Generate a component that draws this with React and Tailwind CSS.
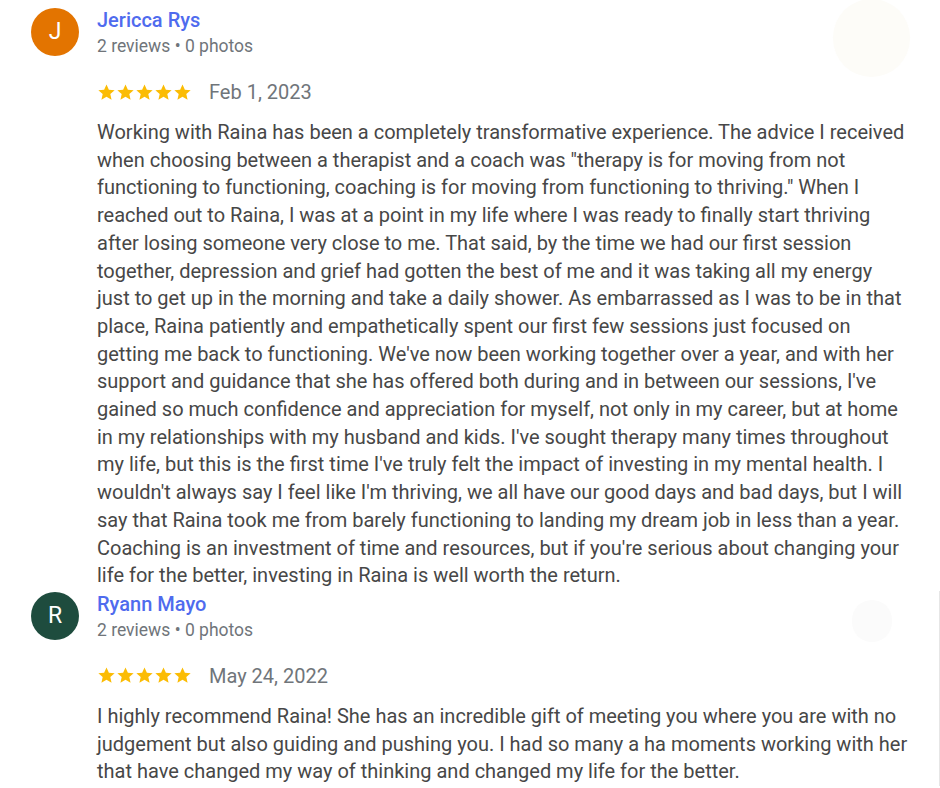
import React from 'react'

const reviews = [
    {
        initial: 'J',
        color: 'bg-[#e37400]',
        name: 'Jericca Rys',
        meta: '2 reviews • 0 photos',
        date: 'Feb 1, 2023',
        edge: false,
        lines: [
            'Working with Raina has been a completely transformative experience. The advice I received',
            'when choosing between a therapist and a coach was "therapy is for moving from not',
            'functioning to functioning, coaching is for moving from functioning to thriving." When I',
            'reached out to Raina, I was at a point in my life where I was ready to finally start thriving',
            'after losing someone very close to me. That said, by the time we had our first session',
            'together, depression and grief had gotten the best of me and it was taking all my energy',
            'just to get up in the morning and take a daily shower. As embarrassed as I was to be in that',
            'place, Raina patiently and empathetically spent our first few sessions just focused on',
            "getting me back to functioning. We've now been working together over a year, and with her",
            "support and guidance that she has offered both during and in between our sessions, I've",
            'gained so much confidence and appreciation for myself, not only in my career, but at home',
            "in my relationships with my husband and kids. I've sought therapy many times throughout",
            "my life, but this is the first time I've truly felt the impact of investing in my mental health. I",
            "wouldn't always say I feel like I'm thriving, we all have our good days and bad days, but I will",
            'say that Raina took me from barely functioning to landing my dream job in less than a year.',
            "Coaching is an investment of time and resources, but if you're serious about changing your",
            'life for the better, investing in Raina is well worth the return.',
        ],
    },
    {
        initial: 'R',
        color: 'bg-[#1e4c3e]',
        name: 'Ryann Mayo',
        meta: '2 reviews • 0 photos',
        date: 'May 24, 2022',
        edge: true,
        lines: [
            'I highly recommend Raina! She has an incredible gift of meeting you where you are with no',
            'judgement but also guiding and pushing you. I had so many a ha moments working with her',
            'that have changed my way of thinking and changed my life for the better.',
        ],
    },
]

function Star() {
    return (
        <svg width="19" height="19" viewBox="0 0 24 24" className="shrink-0">
            <path
                d="M12 1.8l3 6.8 7.3.6-5.5 4.8 1.6 7.2L12 17.4l-6.4 3.8 1.6-7.2-5.5-4.8 7.3-.6z"
                fill="#fbbc04"
            />
        </svg>
    )
}

function Review({ r }) {
    return (
        <div className={`flex pl-[31px] ${r.edge ? 'border-r border-[#e6e6e6]' : ''}`}>
            <div
                className={`w-12 h-12 rounded-full ${r.color} text-white flex items-center justify-center text-[23px] shrink-0 mt-[1px]`}
            >
                {r.initial}
            </div>
            <div className="ml-[18px] flex-1 relative">
                {r.edge ? (
                    <div className="absolute right-[47px] top-[9px] w-[40px] h-[42px] rounded-full bg-[#fbfbfb]" />
                ) : (
                    <div className="absolute right-[30px] top-[-8px] w-[77px] h-[78px] rounded-full bg-[#fdfcf8]" />
                )}
                <p className="text-[20px] leading-[26px] font-medium text-[#4f6bee] relative">{r.name}</p>
                <p className="text-[17.5px] leading-[26px] text-[#70757a] relative">{r.meta}</p>
                <div className="flex items-center mt-[20px] h-[26px]">
                    <div className="flex">
                        {[0, 1, 2, 3, 4].map((i) => (
                            <Star key={i} />
                        ))}
                    </div>
                    <span className="ml-[17px] text-[20px] text-[#70757a]">{r.date}</span>
                </div>
                <div className="mt-[14px] text-[20px] leading-[27.7px] text-[#474747]">
                    {r.lines.map((l, i) => (
                        <span key={i} className="block whitespace-nowrap">{l}</span>
                    ))}
                </div>
            </div>
        </div>
    )
}

export default function App() {
    return (
        <div
            className="w-[940px] h-[788px] bg-white overflow-hidden pt-[7px]"
            style={{ fontFamily: 'Roboto, "Noto Sans", sans-serif' }}
        >
            {reviews.map((r, i) => (
                <div key={i} className={i > 0 ? 'mt-[1px]' : ''}>
                    <Review r={r} />
                </div>
            ))}
        </div>
    )
}
